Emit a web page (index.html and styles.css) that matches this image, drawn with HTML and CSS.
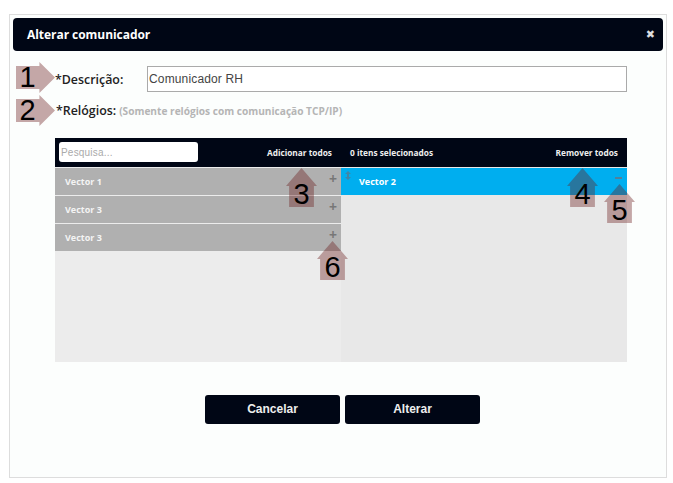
FILE: index.html
```html
<!DOCTYPE html>
<html lang="pt-BR">
<head>
  <meta charset="UTF-8" />
  <title>Alterar comunicador</title>
  <link rel="stylesheet" href="styles.css">
</head>
<body>
  <div class="modal">
    <div class="modal-header">
      <h1>Alterar comunicador</h1>
      <span class="close">&#10006;</span>
    </div>

    <div class="row-descricao">
      <label class="field-label">*Descrição:</label>
      <input class="text-input" type="text" value="Comunicador RH" />
    </div>

    <div class="row-relogios">
      <span class="field-label">*Relógios:</span>
      <span class="hint">(Somente relógios com comunicação TCP/IP)</span>
    </div>

    <div class="picker">
      <div class="picker-side side-left">
        <div class="picker-bar">
          <input class="search" type="text" placeholder="Pesquisa..." />
          <a class="bar-link">Adicionar todos</a>
        </div>
        <ul class="item-list">
          <li class="item">Vector 1<span class="item-icon">+</span></li>
          <li class="item">Vector 3<span class="item-icon">+</span></li>
          <li class="item">Vector 3<span class="item-icon">+</span></li>
        </ul>
      </div>
      <div class="picker-side side-right">
        <div class="picker-bar">
          <span class="bar-link">0 itens selecionados</span>
          <a class="bar-link">Remover todos</a>
        </div>
        <ul class="item-list">
          <li class="item selected">
            <svg class="sort-icon" width="6" height="9" viewBox="0 0 6 9">
              <path d="M3 0 L6 3 H4 V6 H6 L3 9 L0 6 H2 V3 H0 Z" fill="#3f86a8"/>
            </svg>
            Vector 2<span class="item-icon minus"></span>
          </li>
        </ul>
      </div>
    </div>

    <div class="actions">
      <button class="btn">Cancelar</button>
      <button class="btn">Alterar</button>
    </div>
  </div>

  <!-- callouts pasted over the screenshot -->
  <div class="callout right c1">1</div>
  <div class="callout right c2">2</div>
  <div class="callout up c3">3</div>
  <div class="callout up c4">4</div>
  <div class="callout up c5">5</div>
  <div class="callout up c6">6</div>
</body>
</html>
```

FILE: styles.css
```css
* {
  margin: 0;
  padding: 0;
  box-sizing: border-box;
}

body {
  background: #fff;
  padding: 14px 0 0 9px;
  height: 483px;
  overflow: hidden;
  font-family: 'Open Sans', sans-serif;
}

.modal {
  position: relative;
  width: 658px;
  height: 464px;
  background: #fcfefd;
  border: 1px solid #ddd;
  padding: 3px;
}

.modal-header {
  height: 33px;
  background: #000615;
  border-radius: 4px;
  display: flex;
  align-items: center;
  justify-content: space-between;
  padding: 0 8px 0 14px;
  color: #fff;
}

.modal-header h1 {
  font-size: 12px;
  font-weight: 700;
  letter-spacing: -0.05px;
}

.close {
  font-size: 11px;
  color: #ddd;
  font-family: 'DejaVu Sans', sans-serif;
}

.row-descricao {
  display: flex;
  align-items: center;
  margin-top: 15px;
  padding-left: 42px;
}

.field-label {
  font-size: 12.4px;
  font-weight: 600;
  color: #222;
}

.row-descricao .field-label {
  width: 92px;
}

.text-input {
  width: 480px;
  height: 26px;
  border: 1px solid #aaa;
  background: #fff;
  padding: 0 1px;
  font-family: 'Liberation Sans', sans-serif;
  font-size: 12px;
  letter-spacing: 0.15px;
  color: #444;
}

.row-relogios {
  display: flex;
  align-items: center;
  gap: 3px;
  margin-top: 6px;
  padding: 3px 0 0 43px;
  height: 22px;
}

.hint {
  font-size: 10.15px;
  font-weight: 700;
  color: #b5b5b5;
}

.picker {
  display: flex;
  width: 572px;
  height: 224px;
  margin: 18px 0 0 42px;
}

.picker-side {
  display: flex;
  flex-direction: column;
}

.side-left {
  width: 286px;
  background: #ececec;
}

.side-right {
  width: 286px;
  background: #e8e8e8;
}

.picker-bar {
  height: 29px;
  background: #000615;
  display: flex;
  align-items: center;
  justify-content: space-between;
  padding: 0 9px 1px 4px;
  margin-bottom: 1px;
}

.side-right .picker-bar {
  padding-left: 9px;
}

.bar-link {
  font-size: 8.3px;
  font-weight: 700;
  color: #eee;
}

.search {
  width: 139px;
  height: 20px;
  border: 0;
  border-radius: 3px;
  background: #fff;
  padding: 0 2px;
  font-family: 'Liberation Sans', sans-serif;
  font-size: 10px;
  letter-spacing: 0.2px;
}

.search::placeholder {
  color: #aaa;
}

.item-list {
  list-style: none;
}

.item {
  position: relative;
  height: 27px;
  margin-bottom: 1px;
  background: #b0b0b0;
  padding-left: 10px;
  font-size: 9px;
  font-weight: 700;
  line-height: 27px;
  color: #f4f4f4;
}

.item.selected {
  background: #00aeef;
  padding-left: 18px;
  color: #fff;
}

.item-icon {
  position: absolute;
  right: 4px;
  top: -3px;
  font-size: 14px;
  color: #777;
}

.item-icon.minus {
  right: 5px;
  top: 9px;
  width: 7px;
  height: 2px;
  background: #53809a;
}

.sort-icon {
  position: absolute;
  left: 4px;
  top: 3px;
}

.actions {
  display: flex;
  gap: 5px;
  margin-top: 33px;
  padding-left: 192px;
}

.btn {
  width: 135px;
  height: 29px;
  border: 0;
  border-radius: 3px;
  padding-bottom: 2px;
  background: #000615;
  color: #eee;
  font-family: 'Liberation Sans', sans-serif;
  font-size: 12px;
  font-weight: 700;
}

/* callouts */
.callout {
  position: absolute;
  background: rgba(105, 26, 26, 0.38);
  color: #000;
  font-family: 'Liberation Sans', sans-serif;
  font-size: 29px;
  text-align: center;
}

.callout.right {
  width: 39px;
  height: 31px;
  line-height: 31px;
  padding-right: 16px;
  clip-path: polygon(0 13%, 60% 13%, 60% 0, 100% 50%, 60% 100%, 60% 87%, 0 87%);
}

.callout.up {
  width: 31px;
  height: 39px;
  line-height: 24px;
  padding-top: 14px;
  clip-path: polygon(50% 0, 100% 46%, 90% 46%, 90% 100%, 10% 100%, 10% 46%, 0 46%);
}

.c1 { left: 16px; top: 62px; }
.c2 { left: 16px; top: 95px; }
.c3 { left: 286px; top: 168px; padding-top: 13px; }
.c4 { left: 567px; top: 168px; }
.c5 { left: 604px; top: 184px; padding-top: 17px; }
.c6 { left: 317px; top: 241px; }
```
